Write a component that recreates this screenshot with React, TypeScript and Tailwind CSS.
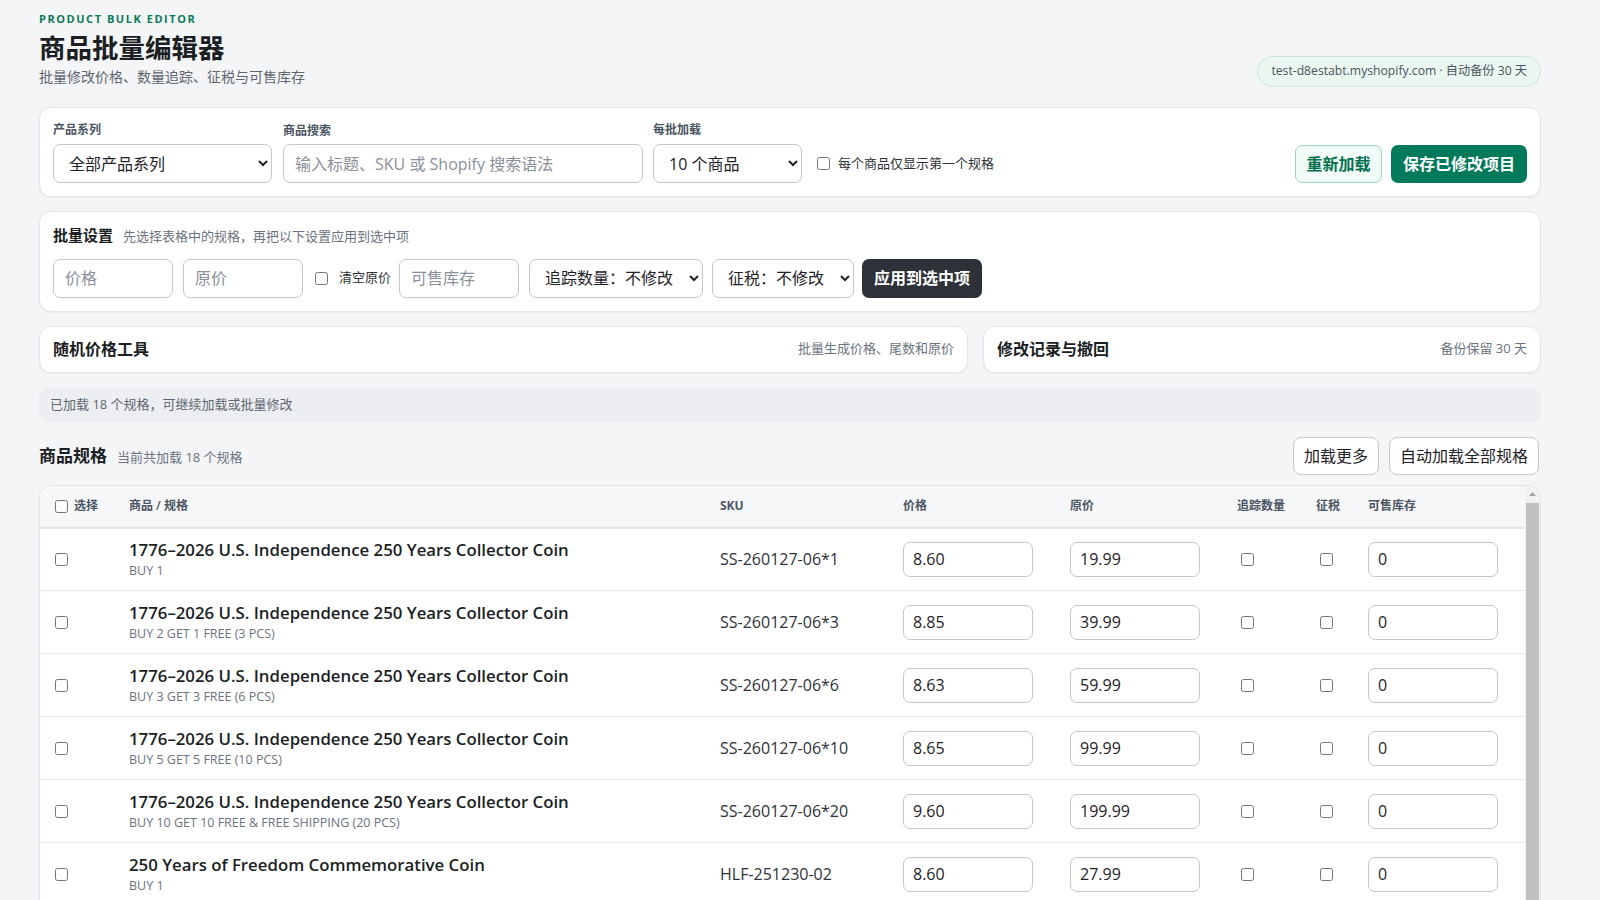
import React from "react";

type Row = {
  title: string;
  variant: string;
  sku: string;
  price: string;
  compare: string;
};

const COIN = "1776–2026 U.S. Independence 250 Years Collector Coin";
const FREEDOM = "250 Years of Freedom Commemorative Coin";
const EAGLE = "American Eagle 250th Anniversary Silver Coin";
const BELL = "Liberty Bell 250th Commemorative Medal";

const rows: Row[] = [
  { title: COIN, variant: "BUY 1", sku: "SS-260127-06*1", price: "8.60", compare: "19.99" },
  { title: COIN, variant: "BUY 2 GET 1 FREE (3 PCS)", sku: "SS-260127-06*3", price: "8.85", compare: "39.99" },
  { title: COIN, variant: "BUY 3 GET 3 FREE (6 PCS)", sku: "SS-260127-06*6", price: "8.63", compare: "59.99" },
  { title: COIN, variant: "BUY 5 GET 5 FREE (10 PCS)", sku: "SS-260127-06*10", price: "8.65", compare: "99.99" },
  { title: COIN, variant: "BUY 10 GET 10 FREE & FREE SHIPPING (20 PCS)", sku: "SS-260127-06*20", price: "9.60", compare: "199.99" },
  { title: FREEDOM, variant: "BUY 1", sku: "HLF-251230-02", price: "8.60", compare: "27.99" },
  { title: FREEDOM, variant: "BUY 2 GET 1 FREE (3 PCS)", sku: "HLF-251230-02*3", price: "8.80", compare: "49.99" },
  { title: FREEDOM, variant: "BUY 3 GET 3 FREE (6 PCS)", sku: "HLF-251230-02*6", price: "8.70", compare: "69.99" },
  { title: FREEDOM, variant: "BUY 5 GET 5 FREE (10 PCS)", sku: "HLF-251230-02*10", price: "8.65", compare: "109.99" },
  { title: FREEDOM, variant: "BUY 10 GET 10 FREE & FREE SHIPPING (20 PCS)", sku: "HLF-251230-02*20", price: "9.60", compare: "209.99" },
  { title: EAGLE, variant: "BUY 1", sku: "AE-260105-01", price: "9.20", compare: "29.99" },
  { title: EAGLE, variant: "BUY 2 GET 1 FREE (3 PCS)", sku: "AE-260105-01*3", price: "9.10", compare: "49.99" },
  { title: EAGLE, variant: "BUY 3 GET 3 FREE (6 PCS)", sku: "AE-260105-01*6", price: "8.95", compare: "69.99" },
  { title: EAGLE, variant: "BUY 5 GET 5 FREE (10 PCS)", sku: "AE-260105-01*10", price: "8.90", compare: "109.99" },
  { title: EAGLE, variant: "BUY 10 GET 10 FREE & FREE SHIPPING (20 PCS)", sku: "AE-260105-01*20", price: "9.80", compare: "219.99" },
  { title: BELL, variant: "BUY 1", sku: "LB-251218-03", price: "7.90", compare: "24.99" },
  { title: BELL, variant: "BUY 2 GET 1 FREE (3 PCS)", sku: "LB-251218-03*3", price: "8.10", compare: "44.99" },
  { title: BELL, variant: "BUY 3 GET 3 FREE (6 PCS)", sku: "LB-251218-03*6", price: "8.20", compare: "64.99" },
];

const inputCls =
  "h-[39px] rounded-[7px] border border-[#c3c7ce] bg-white px-[11px] text-[16px] text-[#1f2328] placeholder:text-[#8a9099] outline-none";
const selectCls =
  "h-[39px] rounded-[7px] border border-[#c3c7ce] bg-white px-[11px] text-[16px] text-[#1f2328] outline-none";
const cellInput =
  "h-[35px] w-[130px] rounded-[7px] border border-[#c3c7ce] bg-white px-[9px] text-[16px] text-[#1f2328] outline-none";

function Label({ children, className = "mb-[6px]" }: { children: React.ReactNode; className?: string }) {
  return <p className={`${className} text-[12px] font-semibold leading-[16px] text-[#4b5563]`}>{children}</p>;
}

export default function App() {
  return (
    <div className="h-screen overflow-hidden bg-[#f4f5f7] font-['Open_Sans','Noto_Sans_CJK_SC',sans-serif] text-[#1f2328]">
      <div className="ml-[39px] w-[1502px] pt-[12px]">
        {/* 页头 */}
        <header className="flex items-end justify-between">
          <div>
            <p className="text-[11px] font-bold leading-[13px] tracking-[0.14em] text-[#0b7a57]">PRODUCT BULK EDITOR</p>
            <h1 className="mt-[7px] text-[26.5px] font-bold leading-[32px] text-[#1b1f24]">商品批量编辑器</h1>
            <p className="mt-[3px] text-[14px] leading-[20px] text-[#5f6670]">批量修改价格、数量追踪、征税与可售库存</p>
          </div>
          <div className="flex h-[31px] items-center rounded-full border border-[#cbe6d9] bg-[#eaf6f0] px-[13px] text-[12.2px] text-[#4b5560]">
            test-d8estabt.myshopify.com · 自动备份 30 天
          </div>
        </header>

        {/* 筛选 */}
        <section className="mt-[20px] rounded-[12px] border border-[#e3e6ea] bg-white px-[13px] pb-[13px] pt-[14px] shadow-[0_1px_2px_rgba(16,24,40,0.05)]">
          <div className="flex items-end">
            <div className="w-[219px]">
              <Label>产品系列</Label>
              <select className={`${selectCls} w-full`} defaultValue="all">
                <option value="all">全部产品系列</option>
              </select>
            </div>
            <div className="ml-[11px] w-[360px]">
              <Label className="mb-[5px]">商品搜索</Label>
              <input className={`${inputCls} h-[38px] w-full`} placeholder="输入标题、SKU 或 Shopify 搜索语法" />
            </div>
            <div className="ml-[10px] w-[149px]">
              <Label>每批加载</Label>
              <select className={`${selectCls} w-full`} defaultValue="10">
                <option value="10">10 个商品</option>
              </select>
            </div>
            <label className="ml-[15px] flex h-[39px] items-center gap-[8px] text-[13px] text-[#2d3238]">
              <input type="checkbox" className="size-[13px]" />
              每个商品仅显示第一个规格
            </label>
            <div className="ml-auto flex gap-[9px]">
              <button className="h-[38px] w-[87px] rounded-[7px] border border-[#9fd3bf] bg-[#f1faf6] text-[16px] font-bold text-[#00704f]">
                重新加载
              </button>
              <button className="h-[38px] w-[136px] rounded-[7px] bg-[#007a5a] text-[16px] font-bold text-white">
                保存已修改项目
              </button>
            </div>
          </div>
        </section>

        {/* 批量设置 */}
        <section className="mt-[14px] rounded-[12px] border border-[#e3e6ea] bg-white px-[13px] pb-[13px] pt-[13px] shadow-[0_1px_2px_rgba(16,24,40,0.05)]">
          <div className="flex items-baseline">
            <h2 className="text-[15px] font-bold leading-[20px] text-[#1b1f24]">批量设置</h2>
            <span className="ml-[10px] text-[13px] text-[#6b7280]">先选择表格中的规格，再把以下设置应用到选中项</span>
          </div>
          <div className="mt-[12px] flex items-center">
            <input className={`${inputCls} w-[120px]`} placeholder="价格" />
            <input className={`${inputCls} ml-[10px] w-[120px]`} placeholder="原价" />
            <label className="ml-[12px] flex items-center gap-[11px] text-[13px] text-[#2d3238]">
              <input type="checkbox" className="size-[13px]" />
              清空原价
            </label>
            <input className={`${inputCls} ml-[8px] w-[120px]`} placeholder="可售库存" />
            <select className={`${selectCls} ml-[10px] w-[174px]`} defaultValue="keep">
              <option value="keep">追踪数量：不修改</option>
            </select>
            <select className={`${selectCls} ml-[9px] w-[142px]`} defaultValue="keep">
              <option value="keep">征税：不修改</option>
            </select>
            <button className="ml-[8px] h-[39px] w-[120px] rounded-[7px] bg-[#2d3238] text-[16px] font-bold text-white">
              应用到选中项
            </button>
          </div>
        </section>

        {/* 工具 */}
        <div className="mt-[14px] flex gap-[15px]">
          <div className="flex h-[47px] w-[929px] items-center justify-between rounded-[12px] border border-[#e3e6ea] bg-white px-[13px] shadow-[0_1px_2px_rgba(16,24,40,0.05)]">
            <span className="text-[16px] font-bold text-[#1b1f24]">随机价格工具</span>
            <span className="text-[13px] text-[#6b7280]">批量生成价格、尾数和原价</span>
          </div>
          <div className="flex h-[47px] flex-1 items-center justify-between rounded-[12px] border border-[#e3e6ea] bg-white px-[13px] shadow-[0_1px_2px_rgba(16,24,40,0.05)]">
            <span className="text-[16px] font-bold text-[#1b1f24]">修改记录与撤回</span>
            <span className="text-[13px] text-[#6b7280]">备份保留 30 天</span>
          </div>
        </div>

        <div className="mt-[15px] flex h-[34px] items-center rounded-[9px] bg-[#eceef1] px-[11px] text-[13px] text-[#5f6670]">
          已加载 18 个规格，可继续加载或批量修改
        </div>

        {/* 商品规格 */}
        <div className="mt-[15px] flex h-[38px] items-center justify-between">
          <div className="flex items-baseline">
            <h2 className="text-[17px] font-bold text-[#1b1f24]">商品规格</h2>
            <span className="ml-[10px] text-[13px] text-[#6b7280]">当前共加载 18 个规格</span>
          </div>
          <div className="mr-[2px] flex gap-[10px]">
            <button className="h-[38px] w-[86px] rounded-[8px] border border-[#c3c7ce] bg-white text-[16px] text-[#1f2328]">
              加载更多
            </button>
            <button className="h-[38px] w-[150px] rounded-[8px] border border-[#c3c7ce] bg-white text-[16px] text-[#1f2328]">
              自动加载全部规格
            </button>
          </div>
        </div>

        <div className="mt-[10px] flex max-h-[740px] overflow-hidden rounded-t-[12px] border border-[#e1e4e8] bg-white shadow-[0_1px_2px_rgba(16,24,40,0.05)]">
          <div className="flex-1 overflow-y-auto [scrollbar-width:none]">
            <table className="w-full table-fixed border-collapse text-left">
              <colgroup>
                <col className="w-[75px]" />
                <col className="w-[591px]" />
                <col className="w-[183px]" />
                <col className="w-[167px]" />
                <col className="w-[167px]" />
                <col className="w-[79px]" />
                <col className="w-[52px]" />
                <col />
              </colgroup>
              <thead>
                <tr className="h-[42px] border-b-2 border-[#e4e6ea] bg-[#f6f7f9] text-[12px] font-semibold text-[#4b5563]">
                  <th className="pl-[15px] font-semibold">
                    <label className="flex items-center gap-[6px]">
                      <input type="checkbox" className="size-[13px]" />
                      选择
                    </label>
                  </th>
                  <th className="px-[14px] font-semibold">商品 / 规格</th>
                  <th className="px-[14px] font-bold">SKU</th>
                  <th className="px-[14px] font-semibold">价格</th>
                  <th className="px-[14px] font-semibold">原价</th>
                  <th className="px-[14px] font-semibold">追踪数量</th>
                  <th className="px-[14px] font-semibold">征税</th>
                  <th className="px-[14px] font-semibold">可售库存</th>
                </tr>
              </thead>
              <tbody>
                {rows.map((r, i) => (
                  <tr key={i} className="h-[63px] border-b border-[#e8eaed]">
                    <td className="pl-[15px]">
                      <input type="checkbox" className="block size-[13px]" />
                    </td>
                    <td className="px-[14px]">
                      <p className="truncate text-[16.8px] font-semibold leading-[21px] text-[#1b1f24]">{r.title}</p>
                      <p className="mt-[3px] text-[12.5px] leading-[16px] text-[#6b7280]">{r.variant}</p>
                    </td>
                    <td className="px-[14px] text-[16px] text-[#2d3238]">{r.sku}</td>
                    <td className="px-[14px]">
                      <input className={cellInput} defaultValue={r.price} />
                    </td>
                    <td className="px-[14px]">
                      <input className={cellInput} defaultValue={r.compare} />
                    </td>
                    <td className="pl-[18px]">
                      <input type="checkbox" className="block size-[13px]" />
                    </td>
                    <td className="pl-[18px]">
                      <input type="checkbox" className="block size-[13px]" />
                    </td>
                    <td className="px-[14px]">
                      <input className={cellInput} defaultValue="0" />
                    </td>
                  </tr>
                ))}
              </tbody>
            </table>
          </div>
          {/* 滚动条 */}
          <div className="flex w-[15px] shrink-0 flex-col bg-[#f1f1f1]">
            <div className="flex h-[17px] items-center justify-center">
              <svg width="7" height="4" viewBox="0 0 7 4">
                <path d="M3.5 0L7 4H0z" fill="#a3a3a3" />
              </svg>
            </div>
            <div className="mx-[1px] h-[440px] bg-[#c1c1c1]" />
          </div>
        </div>
      </div>
    </div>
  );
}
